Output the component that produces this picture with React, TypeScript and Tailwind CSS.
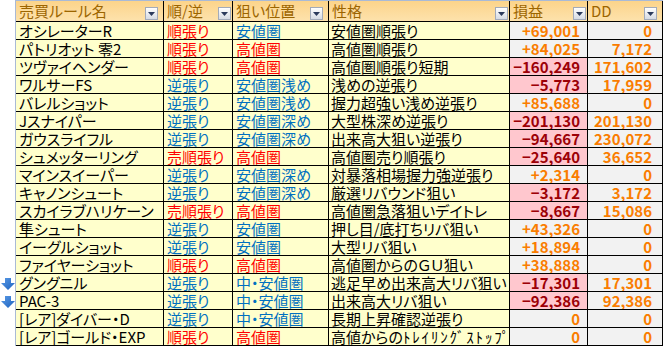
import React from "react";

type Row = {
  name: string;
  arrow?: boolean;
  dir: string;
  dirRed: boolean;
  pos: string;
  posRed: boolean;
  nature: React.ReactNode;
  pl: string;
  neg: boolean;
  dd: string;
};

const rows: Row[] = [
  { name: "オシレーターR", dir: "順張り", dirRed: true, pos: "安値圏", posRed: false, nature: "安値圏順張り", pl: "+69,001", neg: false, dd: "0" },
  { name: "パトリオット 零2", dir: "順張り", dirRed: true, pos: "高値圏", posRed: true, nature: "高値圏順張り", pl: "+84,025", neg: false, dd: "7,172" },
  { name: "ツヴァイヘンダー", dir: "順張り", dirRed: true, pos: "高値圏", posRed: true, nature: "高値圏順張り短期", pl: "−160,249", neg: true, dd: "171,602" },
  { name: "ワルサーFS", dir: "逆張り", dirRed: false, pos: "安値圏浅め", posRed: false, nature: "浅めの逆張り", pl: "−5,773", neg: true, dd: "17,959" },
  { name: "バレルショット", dir: "逆張り", dirRed: false, pos: "安値圏浅め", posRed: false, nature: "握力超強い浅め逆張り", pl: "+85,688", neg: false, dd: "0" },
  { name: "Jスナイパー", dir: "逆張り", dirRed: false, pos: "安値圏深め", posRed: false, nature: "大型株深め逆張り", pl: "−201,130", neg: true, dd: "201,130" },
  { name: "ガウスライフル", dir: "逆張り", dirRed: false, pos: "安値圏深め", posRed: false, nature: "出来高大狙い逆張り", pl: "−94,667", neg: true, dd: "230,072" },
  { name: "シュメッターリング", dir: "売順張り", dirRed: true, pos: "高値圏", posRed: true, nature: "高値圏売り順張り", pl: "−25,640", neg: true, dd: "36,652" },
  { name: "マインスイーパー", dir: "逆張り", dirRed: false, pos: "安値圏深め", posRed: false, nature: "対暴落相場握力強逆張り", pl: "+2,314", neg: false, dd: "0" },
  { name: "キャノンシュート", dir: "逆張り", dirRed: false, pos: "安値圏深め", posRed: false, nature: "厳選リバウンド狙い", pl: "−3,172", neg: true, dd: "3,172" },
  { name: "スカイラブハリケーン", dir: "売順張り", dirRed: true, pos: "高値圏", posRed: true, nature: "高値圏急落狙いデイトレ", pl: "−8,667", neg: true, dd: "15,086" },
  { name: "隼シュート", dir: "逆張り", dirRed: false, pos: "安値圏", posRed: false, nature: "押し目/底打ちリバ狙い", pl: "+43,326", neg: false, dd: "0" },
  { name: "イーグルショット", dir: "逆張り", dirRed: false, pos: "安値圏", posRed: false, nature: "大型リバ狙い", pl: "+18,894", neg: false, dd: "0" },
  { name: "ファイヤーショット", dir: "順張り", dirRed: true, pos: "高値圏", posRed: true, nature: "高値圏からのＧＵ狙い", pl: "+38,888", neg: false, dd: "0" },
  { name: "グングニル", arrow: true, dir: "逆張り", dirRed: false, pos: "中・安値圏", posRed: false, nature: "逃足早め出来高大リバ狙い", pl: "−17,301", neg: true, dd: "17,301" },
  { name: "PAC-3", arrow: true, dir: "逆張り", dirRed: false, pos: "中・安値圏", posRed: false, nature: "出来高大リバ狙い", pl: "−92,386", neg: true, dd: "92,386" },
  { name: "[レア]ダイバー・D", dir: "逆張り", dirRed: false, pos: "中・安値圏", posRed: false, nature: "長期上昇確認逆張り", pl: "0", neg: false, dd: "0" },
  {
    name: "[レア]ゴールド・EXP",
    dir: "順張り",
    dirRed: true,
    pos: "高値圏",
    posRed: true,
    nature: (
      <>
        高値からの
        <span className="[font-feature-settings:normal] tracking-[1.8px]">ﾄﾚｲﾘﾝｸﾞｽﾄｯﾌﾟ</span>
      </>
    ),
    pl: "0",
    neg: false,
    dd: "0",
  },
];

const FilterBtn = ({ mr }: { mr: string }) => (
  <span
    className={`mb-[1px] ${mr} w-[13px] h-[13px] shrink-0 border border-[#a3abba] bg-gradient-to-b from-[#ffffff] to-[#d6dbe4] flex items-center justify-center`}
  >
    <svg width="7" height="4" viewBox="0 0 7 4">
      <path d="M0 0h7L3.5 4z" fill="#2b3a5c" />
    </svg>
  </span>
);

const Arrow = () => (
  <svg width="14" height="12" viewBox="0 0 14 12">
    <defs>
      <linearGradient id="ag" x1="0" y1="0" x2="1" y2="1">
        <stop offset="0" stopColor="#5b9be6" />
        <stop offset="1" stopColor="#1c62bf" />
      </linearGradient>
    </defs>
    <path d="M4 0h6v5h4L7 12 0 5h4z" fill="url(#ag)" />
  </svg>
);

const HeaderCell = ({ label, btn, mr }: { label: string; btn: boolean; mr?: string }) => (
  <div className="h-[21px] border-r border-b border-black bg-gradient-to-b from-[#fcd48a] to-[#fde2ac] flex items-end justify-between pl-[3px] overflow-hidden">
    <span className="leading-[20px] text-[#9c6500] whitespace-nowrap">{label}</span>
    {btn && <FilterBtn mr={mr ?? "mr-[2px]"} />}
  </div>
);

export default function App() {
  return (
    <div className="w-[663px] h-[347px] bg-white flex font-['Noto_Sans_CJK_JP',sans-serif] [font-feature-settings:'palt'] text-[15px] overflow-hidden">
      <div className="w-[15px] flex flex-col pt-[22px]">
        {rows.map((r, i) => (
          <div key={i} className="h-[18px] flex items-center justify-start pl-[1px] pt-[1px]">
            {r.arrow && <Arrow />}
          </div>
        ))}
      </div>
      <div className="border-l border-t border-[#a9bad6] self-start">
        <div className="grid grid-cols-[148px_69px_96px_181px_78px_75px]">
          <HeaderCell label="売買ルール名" btn mr="mr-[5px]" />
          <HeaderCell label="順/逆" btn mr="mr-[1px]" />
          <HeaderCell label="狙い位置" btn mr="mr-[5px]" />
          <HeaderCell label="性格" btn mr="mr-[1px]" />
          <HeaderCell label="損益" btn mr="mr-[1px]" />
          <HeaderCell label="DD" btn mr="mr-[5px]" />
          {rows.map((r, i) => (
            <React.Fragment key={i}>
              <div className="h-[18px] border-r border-b border-black bg-[#ffffcc] pl-[3px] leading-[17px] text-black whitespace-nowrap overflow-hidden">
                {r.name}
              </div>
              <div
                className={`h-[18px] border-r border-b border-black bg-[#ffffcc] pl-[3px] leading-[17px] whitespace-nowrap overflow-hidden ${
                  r.dirRed ? "text-[#ff0000]" : "text-[#0070c0]"
                }`}
              >
                {r.dir}
              </div>
              <div
                className={`h-[18px] border-r border-b border-black bg-[#ffffcc] pl-[3px] leading-[17px] whitespace-nowrap overflow-hidden ${
                  r.posRed ? "text-[#ff0000]" : "text-[#0070c0]"
                }`}
              >
                {r.pos}
              </div>
              <div className="h-[18px] border-r border-b border-black bg-[#ffffcc] pl-[2px] leading-[17px] text-black whitespace-nowrap overflow-hidden">
                {r.nature}
              </div>
              <div
                className={`h-[18px] border-r border-b border-black pr-[7px] text-right font-bold leading-[17px] whitespace-nowrap overflow-hidden ${
                  r.neg ? "bg-[#ffc7ce] text-[#9c0006]" : "bg-[#f2f2f2] text-[#fa7d00]"
                }`}
              >
                {r.pl}
              </div>
              <div className="h-[18px] border-r border-b border-black bg-[#f2f2f2] pr-[10px] text-right font-bold leading-[17px] text-[#fa7d00] whitespace-nowrap overflow-hidden">
                {r.dd}
              </div>
            </React.Fragment>
          ))}
        </div>
      </div>
    </div>
  );
}
